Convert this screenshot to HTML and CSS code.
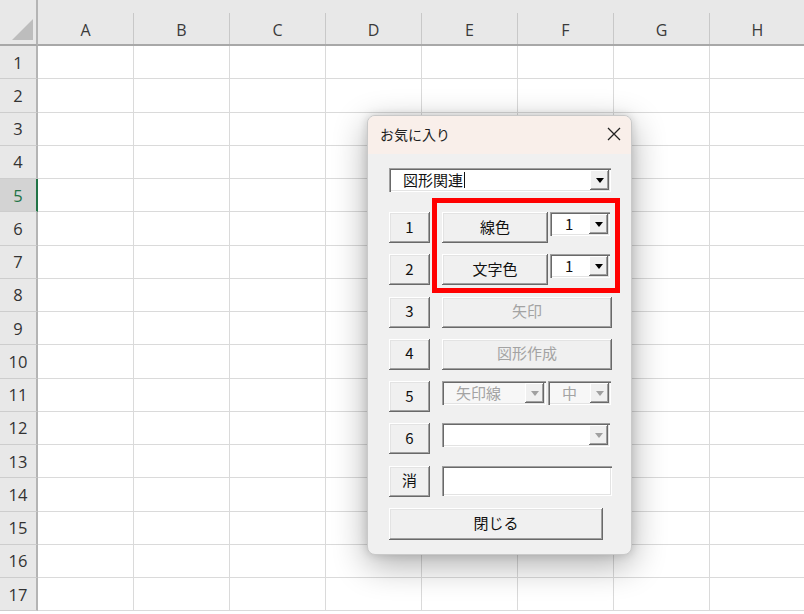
FILE: index.html
```html
<!DOCTYPE html>
<html lang="ja">
<head>
    <meta charset="UTF-8">
    <title>お気に入り</title>
    <link rel="stylesheet" href="styles.css">
</head>
<body>

    <div class="sheet">
        <div class="corner"><span class="corner-tri"></span></div>
        <div class="col-head"><span>A</span></div>
        <div class="col-head"><span>B</span></div>
        <div class="col-head"><span>C</span></div>
        <div class="col-head"><span>D</span></div>
        <div class="col-head"><span>E</span></div>
        <div class="col-head"><span>F</span></div>
        <div class="col-head"><span>G</span></div>
        <div class="col-head"><span>H</span></div>

        <div class="row-head">1</div><div class="cell"></div><div class="cell"></div><div class="cell"></div><div class="cell"></div><div class="cell"></div><div class="cell"></div><div class="cell"></div><div class="cell"></div>
        <div class="row-head">2</div><div class="cell"></div><div class="cell"></div><div class="cell"></div><div class="cell"></div><div class="cell"></div><div class="cell"></div><div class="cell"></div><div class="cell"></div>
        <div class="row-head">3</div><div class="cell"></div><div class="cell"></div><div class="cell"></div><div class="cell"></div><div class="cell"></div><div class="cell"></div><div class="cell"></div><div class="cell"></div>
        <div class="row-head">4</div><div class="cell"></div><div class="cell"></div><div class="cell"></div><div class="cell"></div><div class="cell"></div><div class="cell"></div><div class="cell"></div><div class="cell"></div>
        <div class="row-head active">5</div><div class="cell"></div><div class="cell"></div><div class="cell"></div><div class="cell"></div><div class="cell"></div><div class="cell"></div><div class="cell"></div><div class="cell"></div>
        <div class="row-head">6</div><div class="cell"></div><div class="cell"></div><div class="cell"></div><div class="cell"></div><div class="cell"></div><div class="cell"></div><div class="cell"></div><div class="cell"></div>
        <div class="row-head">7</div><div class="cell"></div><div class="cell"></div><div class="cell"></div><div class="cell"></div><div class="cell"></div><div class="cell"></div><div class="cell"></div><div class="cell"></div>
        <div class="row-head">8</div><div class="cell"></div><div class="cell"></div><div class="cell"></div><div class="cell"></div><div class="cell"></div><div class="cell"></div><div class="cell"></div><div class="cell"></div>
        <div class="row-head">9</div><div class="cell"></div><div class="cell"></div><div class="cell"></div><div class="cell"></div><div class="cell"></div><div class="cell"></div><div class="cell"></div><div class="cell"></div>
        <div class="row-head">10</div><div class="cell"></div><div class="cell"></div><div class="cell"></div><div class="cell"></div><div class="cell"></div><div class="cell"></div><div class="cell"></div><div class="cell"></div>
        <div class="row-head">11</div><div class="cell"></div><div class="cell"></div><div class="cell"></div><div class="cell"></div><div class="cell"></div><div class="cell"></div><div class="cell"></div><div class="cell"></div>
        <div class="row-head">12</div><div class="cell"></div><div class="cell"></div><div class="cell"></div><div class="cell"></div><div class="cell"></div><div class="cell"></div><div class="cell"></div><div class="cell"></div>
        <div class="row-head">13</div><div class="cell"></div><div class="cell"></div><div class="cell"></div><div class="cell"></div><div class="cell"></div><div class="cell"></div><div class="cell"></div><div class="cell"></div>
        <div class="row-head">14</div><div class="cell"></div><div class="cell"></div><div class="cell"></div><div class="cell"></div><div class="cell"></div><div class="cell"></div><div class="cell"></div><div class="cell"></div>
        <div class="row-head">15</div><div class="cell"></div><div class="cell"></div><div class="cell"></div><div class="cell"></div><div class="cell"></div><div class="cell"></div><div class="cell"></div><div class="cell"></div>
        <div class="row-head">16</div><div class="cell"></div><div class="cell"></div><div class="cell"></div><div class="cell"></div><div class="cell"></div><div class="cell"></div><div class="cell"></div><div class="cell"></div>
        <div class="row-head">17</div><div class="cell"></div><div class="cell"></div><div class="cell"></div><div class="cell"></div><div class="cell"></div><div class="cell"></div><div class="cell"></div><div class="cell"></div>
    </div>

    <!-- UserForm: お気に入り -->
    <div class="form">
        <div class="form-title">
            <span>お気に入り</span>
            <svg class="close" width="14" height="14" viewBox="0 0 14 14">
                <path d="M1 1 L13 13 M13 1 L1 13" stroke="#222" stroke-width="1.3" fill="none"/>
            </svg>
        </div>

        <div class="form-body">
            <div class="combo wide-combo">
                <span class="combo-text">図形関連<span class="caret"></span></span>
                <span class="drop"><i class="arrow"></i></span>
            </div>

            <div class="controls">
                <button class="btn num">1</button>
                <div class="pair">
                    <button class="btn color-btn">線色</button>
                    <div class="combo small-combo">
                        <span class="combo-text">1</span>
                        <span class="drop"><i class="arrow"></i></span>
                    </div>
                </div>

                <button class="btn num">2</button>
                <div class="pair">
                    <button class="btn color-btn">文字色</button>
                    <div class="combo small-combo">
                        <span class="combo-text">1</span>
                        <span class="drop"><i class="arrow"></i></span>
                    </div>
                </div>

                <button class="btn num">3</button>
                <button class="btn full disabled">矢印</button>

                <button class="btn num">4</button>
                <button class="btn full disabled">図形作成</button>

                <button class="btn num">5</button>
                <div class="pair">
                    <div class="combo line-combo disabled">
                        <span class="combo-text">矢印線</span>
                        <span class="drop"><i class="arrow"></i></span>
                    </div>
                    <div class="combo size-combo disabled">
                        <span class="combo-text">中</span>
                        <span class="drop"><i class="arrow"></i></span>
                    </div>
                </div>

                <button class="btn num">6</button>
                <div class="combo full-combo">
                    <span class="combo-text"></span>
                    <span class="drop"><i class="arrow dim"></i></span>
                </div>

                <button class="btn num">消</button>
                <div class="textbox"></div>

                <button class="btn close-btn">閉じる</button>
            </div>

            <div class="highlight"></div>
        </div>
    </div>

</body>
</html>
```

FILE: styles.css
```css
/* Sheet colours */
:root {
    --head-bg: #e8e8e8;
    --head-line: #c8c8c8;
    --grid-line: #dadada;
    --face: #f0f0f0;
    --dark-edge: #696969;
    --mid-edge: #a0a0a0;
    --jp: "Noto Sans CJK JP", "Noto Sans", sans-serif;
}

body {
    margin: 0;
    background: #fff;
    font-family: "Open Sans", "Liberation Sans", sans-serif;
    overflow: hidden;
    height: 614px;
    position: relative;
}

/* ---------- spreadsheet ---------- */
.sheet {
    display: grid;
    grid-template-columns: 38px repeat(8, 96px);
    grid-template-rows: 46px repeat(17, 33.25px);
    width: 806px;
}

.corner {
    background: var(--head-bg);
    border-bottom: 2px solid #a8a8a8;
    border-right: 2px solid #b4b4b4;
    box-sizing: border-box;
    padding: 19px 0 0 12px;
}

.corner-tri {
    display: block;
    width: 21px;
    height: 21px;
    background: #bdbdbd;
    clip-path: polygon(100% 0, 100% 100%, 0 100%);
}

.col-head {
    background: var(--head-bg);
    padding-top: 13px;
    border-bottom: 2px solid #a8a8a8;
    box-sizing: border-box;
}

.col-head span {
    display: flex;
    height: 100%;
    align-items: center;
    justify-content: center;
    border-right: 1px solid var(--head-line);
    font-size: 16px;
    color: #3a3a3a;
    padding-top: 2px;
    box-sizing: border-box;
}

.row-head {
    background: var(--head-bg);
    border-right: 2px solid #b4b4b4;
    border-bottom: 1px solid #cdcdcd;
    box-sizing: border-box;
    display: flex;
    align-items: center;
    justify-content: center;
    font-size: 16.5px;
    color: #333;
}

.row-head.active {
    background: #d3d3d3;
    color: #217346;
    border-right-color: #217346;
}

.cell {
    border-right: 1px solid var(--grid-line);
    border-bottom: 1px solid var(--grid-line);
    box-sizing: border-box;
}

/* ---------- user form ---------- */
.form {
    position: absolute;
    left: 367px;
    top: 115px;
    width: 265px;
    height: 440px;
    box-sizing: border-box;
    border: 1px solid #c9c9c9;
    border-radius: 8px;
    background: var(--face);
    box-shadow: 0 10px 34px rgba(0, 0, 0, 0.32), 0 0 10px rgba(0, 0, 0, 0.14);
    overflow: hidden;
    font-family: var(--jp);
}

.form-title {
    height: 36px;
    background: #f9efea;
    display: flex;
    align-items: center;
    justify-content: space-between;
    padding: 0 10px 2px 12px;
    font-size: 14px;
    color: #1f1f1f;
}

.form-body {
    position: relative;
    padding: 14px 0 0 21px;
}

/* 3D classic controls */
.btn {
    display: flex;
    align-items: center;
    justify-content: center;
    margin: 0;
    padding: 0 0 3px;
    border: none;
    background: var(--face);
    font-family: var(--jp);
    font-size: 15px;
    line-height: 1;
    color: #111;
    box-shadow:
        inset -1px -1px var(--dark-edge),
        inset 1px 1px #fff,
        inset -2px -2px var(--mid-edge),
        inset 2px 2px #e3e3e3;
}

.btn.disabled {
    color: #a3a3a3;
}

.combo {
    display: flex;
    height: 24px;
    box-sizing: border-box;
    padding: 2px;
    background: #fff;
    box-shadow:
        inset 1px 1px var(--mid-edge),
        inset 2px 2px var(--dark-edge),
        inset -1px -1px #fff,
        inset -2px -2px #e3e3e3;
}

.combo-text {
    flex: 1;
    display: flex;
    align-items: center;
    padding: 0 0 2px 12px;
    font-size: 15px;
    line-height: 1;
    color: #111;
}

.caret {
    display: inline-block;
    width: 1px;
    height: 16px;
    background: #111;
    margin: 2px 0 0 1px;
}

.drop {
    width: 19px;
    display: flex;
    align-items: center;
    justify-content: center;
    background: var(--face);
    box-shadow:
        inset -1px -1px var(--dark-edge),
        inset 1px 1px #fff,
        inset -2px -2px var(--mid-edge);
}

.arrow {
    width: 0;
    height: 0;
    border-left: 4px solid transparent;
    border-right: 4px solid transparent;
    border-top: 5px solid #000;
}

.arrow.dim,
.combo.disabled .arrow {
    border-top-color: #a0a0a0;
}

.combo.disabled {
    background: #f7f7f7;
}

.combo.disabled .combo-text {
    color: #a3a3a3;
}

.wide-combo {
    width: 222px;
}

.controls {
    display: grid;
    grid-template-columns: 41px 170px;
    grid-auto-rows: 31px;
    column-gap: 12px;
    row-gap: 11.3px;
    margin-top: 20px;
}

.pair {
    display: flex;
    gap: 2px;
    align-items: flex-start;
}

.color-btn {
    width: 106px;
    height: 31px;
}

.small-combo {
    width: 60px;
}

.small-combo .combo-text {
    padding-left: 13px;
}

.full {
    width: 170px;
}

.line-combo {
    width: 104px;
}

.size-combo {
    width: 63px;
}

.full-combo {
    width: 168px;
}

.textbox {
    width: 170px;
    height: 30px;
    box-sizing: border-box;
    background: #fff;
    box-shadow:
        inset 1px 1px var(--mid-edge),
        inset 2px 2px var(--dark-edge),
        inset -1px -1px #fff,
        inset -2px -2px #e3e3e3;
}

.close-btn {
    grid-column: 1 / -1;
    width: 214px;
    height: 32px;
}

/* red frame marking the colour buttons */
.highlight {
    position: absolute;
    left: 64px;
    top: 44px;
    width: 188px;
    height: 95px;
    box-sizing: border-box;
    border: 5px solid #ff0000;
}
```
